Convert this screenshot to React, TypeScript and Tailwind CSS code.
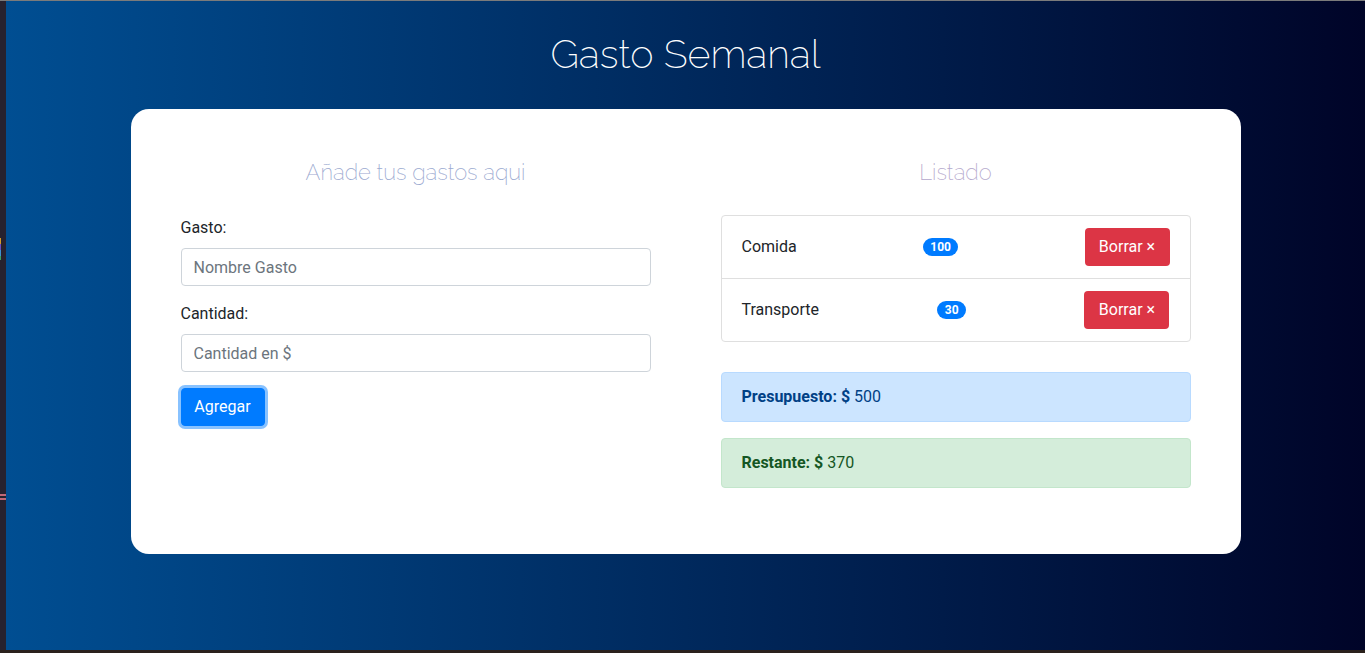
import React from "react";

const body = { fontFamily: '"Segoe UI", Roboto, "Liberation Sans", sans-serif' };
const thin = { fontFamily: 'Raleway, Inter, "Open Sans", sans-serif' };

function Item({ name, amount }: { name: string; amount: number }) {
  return (
    <li className="flex items-center justify-between px-5 py-3 border-b border-[#dfdfdf] last:border-b-0">
      <span className="text-[16px] leading-6 text-[#212529]">{name}</span>
      <span className="rounded-full bg-[#007bff] text-white text-[12px] font-bold leading-none px-[7.5px] py-[3px]">{amount}</span>
      <button className="w-[85px] h-[38px] rounded-[4px] bg-[#dc3545] text-white text-[16px] leading-6 flex items-center justify-center">Borrar &times;</button>
    </li>
  );
}

export default function App() {
  return (
    <div className="w-[1365px] h-[653px] flex flex-col overflow-hidden bg-[#27222f]" style={body}>
      <div className="h-px bg-[#7b7b7b] shrink-0" />
      <div className="flex flex-1 min-h-0">
        <div className="w-[6px] shrink-0 bg-[#27222f] flex flex-col">
          <div className="h-[237px]" />
          <div className="w-px h-[6px] bg-[#d29a2a]" />
          <div className="w-px h-[6px] bg-[#6a4fc0]" />
          <div className="w-px h-[6px] bg-[#3f8fd0]" />
          <div className="w-px h-[4px] bg-[#3aa060]" />
          <div className="h-[234px]" />
          <div className="w-[6px] h-[2px] bg-[#c06878]" />
          <div className="h-[2px]" />
          <div className="w-[6px] h-[2px] bg-[#c06878]" />
        </div>
        <main className="flex-1 flex flex-col items-center bg-[linear-gradient(to_right,#004e92,#000428)]">
          <h1 className="mt-[29px] text-[39.5px] leading-[48px] text-white font-extralight" style={thin}>
            Gasto Semanal
          </h1>
          <div className="mt-[31px] w-[1110px] bg-white rounded-[18px] px-[50px] pt-[49px] pb-[50px] grid grid-cols-2 gap-[70px]">
            <div>
              <h2 className="text-[22px] leading-[29px] text-center font-extralight text-[#9aa9d0]" style={thin}>
                Añade tus gastos aqui
              </h2>
              <form className="mt-[29px]" onSubmit={(e) => e.preventDefault()}>
                <div className="mb-4">
                  <label className="block mb-2 text-[16px] leading-6 text-[#212529]">Gasto:</label>
                  <input
                    className="w-full h-[38px] px-3 border border-[#ced4da] rounded-[4px] text-[16px] placeholder:text-[#6c757d] outline-none"
                    placeholder="Nombre Gasto"
                  />
                </div>
                <div className="mb-4">
                  <label className="block mb-2 text-[16px] leading-6 text-[#212529]">Cantidad:</label>
                  <input
                    className="w-full h-[38px] px-3 border border-[#ced4da] rounded-[4px] text-[16px] placeholder:text-[#6c757d] outline-none"
                    placeholder="Cantidad en $"
                  />
                </div>
                <button className="w-[84px] h-[38px] rounded-[4px] bg-[#007bff] border border-[#007bff] text-white text-[16px] leading-6 shadow-[0_0_0_3px_rgba(38,143,255,0.55)]">
                  Agregar
                </button>
              </form>
            </div>
            <div>
              <h2 className="text-[22px] leading-[29px] text-center font-extralight text-[#b4a8cc]" style={thin}>
                Listado
              </h2>
              <ul className="mt-[28px] border border-[#dfdfdf] rounded-[4px]">
                <Item name="Comida" amount={100} />
                <Item name="Transporte" amount={30} />
              </ul>
              <div className="mt-[30px] mb-4 px-5 py-3 rounded-[4px] border border-[#b8daff] bg-[#cce5ff] text-[#004085] text-[16px] leading-6">
                <b>Presupuesto: $</b> 500
              </div>
              <div className="mb-4 px-5 py-3 rounded-[4px] border border-[#c3e6cb] bg-[#d4edda] text-[#155724] text-[16px] leading-6">
                <b>Restante: $</b> 370
              </div>
            </div>
          </div>
        </main>
      </div>
      <div className="h-[3px] bg-[#2a211c] shrink-0" />
    </div>
  );
}
